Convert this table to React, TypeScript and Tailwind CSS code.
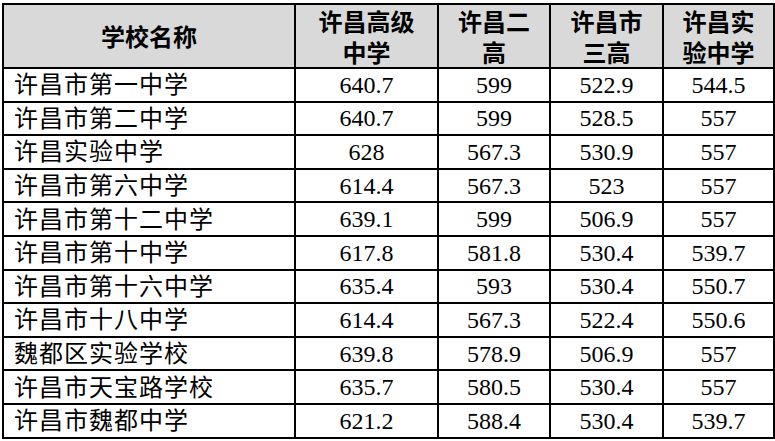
const cjk = { fontFamily: '"Noto Sans CJK SC", sans-serif' };
const num = { fontFamily: '"Liberation Serif", "Noto Sans CJK SC", serif' };

const headers = ["许昌高级<br>中学", "许昌二<br>高", "许昌市<br>三高", "许昌实<br>验中学"];

const rows: [string, string, string, string, string][] = [
  ["许昌市第一中学", "640.7", "599", "522.9", "544.5"],
  ["许昌市第二中学", "640.7", "599", "528.5", "557"],
  ["许昌实验中学", "628", "567.3", "530.9", "557"],
  ["许昌市第六中学", "614.4", "567.3", "523", "557"],
  ["许昌市第十二中学", "639.1", "599", "506.9", "557"],
  ["许昌市第十中学", "617.8", "581.8", "530.4", "539.7"],
  ["许昌市第十六中学", "635.4", "593", "530.4", "550.7"],
  ["许昌市十八中学", "614.4", "567.3", "522.4", "550.6"],
  ["魏都区实验学校", "639.8", "578.9", "506.9", "557"],
  ["许昌市天宝路学校", "635.7", "580.5", "530.4", "557"],
  ["许昌市魏都中学", "621.2", "588.4", "530.4", "539.7"],
];

export default function App() {
  return (
    <div className="h-[441px] w-[775px] bg-white pl-[2px] pt-[3px]">
      <table className="w-[771px] table-fixed border-collapse text-black">
        <colgroup>
          <col className="w-[292px]" />
          <col className="w-[143px]" />
          <col className="w-[112px]" />
          <col className="w-[113px]" />
          <col className="w-[111px]" />
        </colgroup>
        <thead>
          <tr className="h-[63px] bg-[#d9d9d9]">
            <th className="border-2 border-black p-0 text-center text-[24px] font-bold" style={cjk}>
              学校名称
            </th>
            {headers.map((h) => {
              const [a, b] = h.split("<br>");
              return (
                <th
                  key={h}
                  className="border-2 border-black p-0 text-center text-[24px] leading-[31px] font-bold"
                  style={cjk}
                >
                  {a}
                  <br />
                  {b}
                </th>
              );
            })}
          </tr>
        </thead>
        <tbody>
          {rows.map((r) => (
            <tr key={r[0]} className="h-[33.6px]">
              <td className="border-2 border-black pb-[3px] pl-[10px] text-[24px] leading-none tracking-[1px]" style={cjk}>
                {r[0]}
              </td>
              {r.slice(1).map((v, i) => (
                <td key={i} className="border-2 border-black text-center text-[24px] leading-none" style={num}>
                  {v}
                </td>
              ))}
            </tr>
          ))}
        </tbody>
      </table>
    </div>
  );
}
